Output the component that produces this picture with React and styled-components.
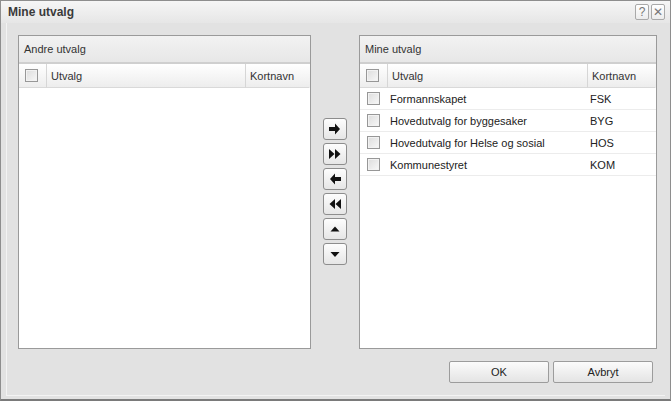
import styled, { createGlobalStyle } from 'styled-components';

const GlobalStyle = createGlobalStyle`
  html, body {
    margin: 0;
    padding: 0;
    background: #ffffff;
  }
  body {
    font-family: "Liberation Sans", Arial, sans-serif;
    font-size: 11px;
    color: #222;
  }
`;

const Window = styled.div`
  box-sizing: border-box;
  width: 671px;
  height: 401px;
  border: 1px solid #8e8e8e;
  border-bottom: 2px solid #7a7a7a;
  background: #e2e2e2;
  display: flex;
  flex-direction: column;
`;

const TitleBar = styled.div`
  height: 22px;
  display: flex;
  align-items: center;
  justify-content: space-between;
  padding: 0 5px 0 7px;
  background: linear-gradient(#f6f6f6, #e6e6e6);
`;

const Title = styled.span`
  font-size: 12px;
  font-weight: bold;
  color: #3a3a3a;
`;

const TitleButtons = styled.div`
  display: flex;
  gap: 2px;
`;

const TitleButton = styled.div`
  box-sizing: border-box;
  width: 14px;
  height: 16px;
  border: 1px solid #a9a9a9;
  border-radius: 2px;
  background: linear-gradient(#ffffff, #ececec);
  color: #777;
  font-size: 12px;
  line-height: 14px;
  text-align: center;
`;

const Frame = styled.div`
  flex: 1;
  margin: 0 5px 3px 5px;
  border-left: 1px solid #f3f3f3;
  border-bottom: 1px solid #f3f3f3;
  display: flex;
  flex-direction: column;
  padding: 12px 8px 0 11px;
`;

const Columns = styled.div`
  display: flex;
  align-items: flex-start;
`;

const Panel = styled.div`
  box-sizing: border-box;
  flex: none;
  width: ${(p) => p.$width}px;
  height: 314px;
  border: 1px solid #9a9a9a;
  background: #ffffff;
  display: flex;
  flex-direction: column;
`;

const PanelHeader = styled.div`
  height: 26px;
  display: flex;
  align-items: center;
  padding-left: 5px;
  background: linear-gradient(#f2f2f2, #e7e7e7);
  border-bottom: 2px solid #cfcfcf;
  color: #333;
`;

const Grid = styled.div`
  display: grid;
  grid-template-columns: 28px ${(p) => p.$main}px 1fr;
`;

const HeadCell = styled.div`
  height: 23px;
  display: flex;
  align-items: center;
  padding-left: ${(p) => (p.$check ? 6 : 4)}px;
  border-right: 1px solid ${(p) => (p.$last ? 'transparent' : '#d6d6d6')};
  border-bottom: 1px solid #d9d9d9;
  background: linear-gradient(#ffffff, #ededed);
  color: #333;
`;

const Cell = styled.div`
  height: 21px;
  display: flex;
  align-items: center;
  padding-left: ${(p) => (p.$check ? 7 : 2)}px;
  border-bottom: 1px solid #ececec;
  color: #222;
`;

const CheckBox = styled.span`
  box-sizing: border-box;
  width: 13px;
  height: 13px;
  border: 1px solid #979797;
  background: linear-gradient(135deg, #dcdcdc, #f8f8f8);
  box-shadow: inset 0 0 0 1px #f2f2f2;
`;

const ButtonColumn = styled.div`
  flex: none;
  display: flex;
  flex-direction: column;
  gap: 3px;
  margin: 83px 12px 0 12px;
`;

const MoveButton = styled.button`
  box-sizing: border-box;
  width: 24px;
  height: 22px;
  padding: 0;
  border: 1px solid #8d8d8d;
  border-radius: 3px;
  background: linear-gradient(#fdfdfd, #e6e6e6);
  display: flex;
  align-items: center;
  justify-content: center;
`;

const Footer = styled.div`
  display: flex;
  justify-content: flex-end;
  gap: 4px;
  margin-top: 12px;
  padding-right: 4px;
`;

const DialogButton = styled.button`
  box-sizing: border-box;
  width: 100px;
  height: 22px;
  border: 1px solid #9c9c9c;
  border-radius: 2px;
  background: linear-gradient(#fbfbfb, #e4e4e4);
  font-family: "Liberation Sans", Arial, sans-serif;
  font-size: 11px;
  color: #222;
`;

const icons = {
  right: <path d="M1 5h6V1.5L12 7l-5 5.5V9H1z" />,
  allRight: <path d="M1 2l5.5 5L1 12zM7 2l5.5 5L7 12z" />,
  left: <path d="M13 5H7V1.5L2 7l5 5.5V9h6z" />,
  allLeft: <path d="M13 2L7.5 7l5.5 5zM7 2L1.5 7 7 12z" />,
  up: <path d="M2.5 9.5L7 4.5l4.5 5z" />,
  down: <path d="M2.5 5L7 10l4.5-5z" />,
};

function Arrow({ type }) {
  return (
    <MoveButton>
      <svg width="14" height="14" viewBox="0 0 14 14" fill="#111">
        {icons[type]}
      </svg>
    </MoveButton>
  );
}

function ListPanel({ title, width, main, rows }) {
  return (
    <Panel $width={width}>
      <PanelHeader>{title}</PanelHeader>
      <Grid $main={main}>
        <HeadCell $check>
          <CheckBox />
        </HeadCell>
        <HeadCell>Utvalg</HeadCell>
        <HeadCell $last>Kortnavn</HeadCell>
        {rows.map(([name, code]) => (
          <>
            <Cell $check key={code + 'c'}>
              <CheckBox />
            </Cell>
            <Cell key={code + 'n'}>{name}</Cell>
            <Cell key={code}>{code}</Cell>
          </>
        ))}
      </Grid>
    </Panel>
  );
}

const mine = [
  ['Formannskapet', 'FSK'],
  ['Hovedutvalg for byggesaker', 'BYG'],
  ['Hovedutvalg for Helse og sosial', 'HOS'],
  ['Kommunestyret', 'KOM'],
];

export default function App() {
  return (
    <>
      <GlobalStyle />
      <Window>
        <TitleBar>
          <Title>Mine utvalg</Title>
          <TitleButtons>
            <TitleButton>?</TitleButton>
            <TitleButton>✕</TitleButton>
          </TitleButtons>
        </TitleBar>
        <Frame>
          <Columns>
            <ListPanel title="Andre utvalg" width={293} main={199} rows={[]} />
            <ButtonColumn>
              <Arrow type="right" />
              <Arrow type="allRight" />
              <Arrow type="left" />
              <Arrow type="allLeft" />
              <Arrow type="up" />
              <Arrow type="down" />
            </ButtonColumn>
            <ListPanel title="Mine utvalg" width={298} main={200} rows={mine} />
          </Columns>
          <Footer>
            <DialogButton>OK</DialogButton>
            <DialogButton>Avbryt</DialogButton>
          </Footer>
        </Frame>
      </Window>
    </>
  );
}
